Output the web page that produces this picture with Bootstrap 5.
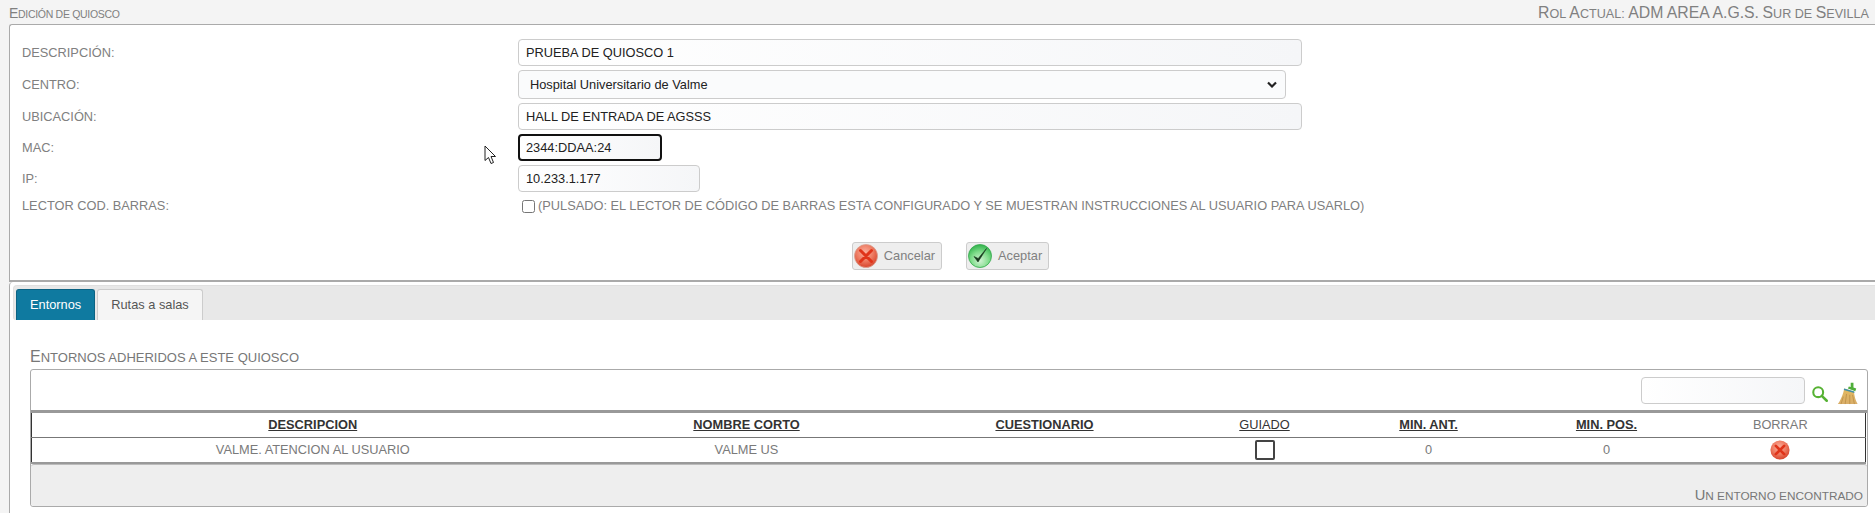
<!DOCTYPE html>
<html lang="es">
<head>
<meta charset="utf-8">
<title>Edición de quiosco</title>
<link rel="stylesheet" href="https://cdn.jsdelivr.net/npm/bootstrap@5.3.0/dist/css/bootstrap.min.css">
<style>
html, body { height: 100%; overflow: hidden; }
body { background: #f4f4f4; font-family: "Liberation Sans", Arial, sans-serif; font-size: 12.8px; color: #808080; position: relative; }
.caps-text { text-transform: uppercase; }
.top-strip { height: 24px; padding: 4px 6px 0 9px; line-height: 18px; color: #808080; }
.top-strip .left-title { font-size: 10.5px; letter-spacing: -.3px; }
.top-strip .left-title .cap-big { font-size: 14px; }
.top-strip .role-title { font-size: 12.6px; }
.top-strip .role-title .cap-big { font-size: 15.8px; }
.edit-panel { margin-left: 9px; background: #fff; border: 1px solid #aaa; border-bottom-width: 2px; border-right: 0; border-top-left-radius: 3px; padding: 14px 0 10px 12px; }
.field-label { width: 496px; flex: none; margin: 0; line-height: 16px; }
.edit-panel .form-control, .grid-search { height: 27px; padding: 2px 7px; font-size: 12.8px; line-height: 16px; color: #222; border: 1px solid #ccc; border-radius: 4px; background: linear-gradient(90deg, #fff, #f5f6f8); box-shadow: none; }
.w-desc { width: 784px; }
.w-mac { width: 144px; }
.w-ip { width: 182px; }
.edit-panel .form-control.mac-focus { border: 2px solid #111; padding: 2px 6px; }
.edit-panel .form-select { width: 768px; height: 29px; padding: 2px 6px 2px 11px; font-size: 12.8px; color: #222; border: 1px solid #ccc; border-radius: 4px; background-color: #fafbfc; background-image: url("data:image/svg+xml,%3csvg xmlns='http://www.w3.org/2000/svg' viewBox='0 0 10 7'%3e%3cpath fill='none' stroke='%23222' stroke-width='2.200' d='M1 1.500 5 5.500 9 1.500'/%3e%3c/svg%3e"); background-size: 10px 7px; background-position: right 8px center; }
.bar-row { height: 20px; }
.bar-check { width: 13px; height: 13px; margin: 0 3px 0 4px; flex: none; border-radius: 2px; border: 1px solid #555; background: #fff; }
.action-row { margin-top: 26px; padding-left: 4px; gap: 24px; }
.action-btn { height: 28px; padding: 0 6px 0 1px; display: flex; align-items: center; gap: 6px; background: #eee; border: 1px solid #ccc; border-radius: 3px; font-size: 12.8px; color: #808080; }
.lower-panel { margin-left: 9px; background: #fff; border-left: 1px solid #aaa; border-top-left-radius: 4px; padding-top: 3px; height: 231px; }
.tab-strip { margin-left: 3px; background: #e8e8e8; height: 35px; padding: 3px 0 0 2px; border: 1px solid #e0e0e0; border-width: 1px 0 0 1px; border-radius: 4px 0 0 3px; gap: 2px; }
.tab-strip .nav-link { height: 31px; margin: 0; padding: 0 13px; line-height: 29px; font-size: 12.8px; border: 1px solid #ccc; border-bottom: 0; border-radius: 3px 3px 0 0; background: #f5f5f5; color: #555; }
.tab-strip .nav-link.active { background: #0f7aa0; color: #fff; border-color: #0b6383; }
.lower-body { padding: 28px 7px 0 20px; }
.grid-title { font-size: 13px; line-height: 18px; margin-bottom: 2px; color: #777; font-weight: 400; }
.grid-title .cap-big { font-size: 16px; }
.grid-box { border: 1px solid #aaa; border-radius: 3px; background: #fff; }
.grid-tools { height: 43px; padding: 7px 8px 0 0; gap: 6px; border-bottom: 3px solid #999; }
.grid-search { width: 164px; flex: none; display: block; }
.grid-table { table-layout: fixed; width: calc(100% - 1px); margin: 0; border-collapse: collapse; border-left: 1px solid #333; border-right: 1px solid #333; }
.grid-table th, .grid-table td { padding: 0; text-align: center; vertical-align: middle; font-size: 12.8px; color: #7a7a7a; background: transparent; box-shadow: none; border-bottom: 1px solid #777; }
.grid-table th { height: 24px; font-weight: 400; }
.grid-table td { height: 26px; }
.grid-table tbody td { border-bottom: 2px solid #999; }
.grid-table th a { color: #333; font-weight: 700; }
.grid-table th a.plain-link { font-weight: 400; }
.c-desc { width: 562px; }
.c-name { width: 306px; }
.c-quest { width: 290px; }
.c-guide { width: 150px; }
.c-min { width: 178px; }
.row-check { display: block; width: 20px; height: 20px; margin: 0 auto; border: 2px solid #444; border-radius: 2px; background: #fff; }
.row-del { display: block; margin: 0 auto; }
.grid-foot { height: 42px; background: #eee; border-top: 1px solid #bbb; border-radius: 3px; padding: 0 4px 1px 0; font-size: 11.8px; line-height: 18px; color: #777; }
.grid-foot .cap-big { font-size: 14.7px; }
.mouse-pointer { position: absolute; left: 484px; top: 145px; }
</style>
</head>
<body>
<svg width="0" height="0" class="position-absolute">
  <defs>
    <radialGradient id="redBall" cx="45%" cy="35%" r="65%"><stop offset="0" stop-color="#fbb09e"/><stop offset=".55" stop-color="#ee7b62"/><stop offset="1" stop-color="#d8442c"/></radialGradient>
    <radialGradient id="greenBall" cx="50%" cy="70%" r="70%"><stop offset="0" stop-color="#d2f3d4"/><stop offset=".55" stop-color="#7fdc8a"/><stop offset="1" stop-color="#2fb24a"/></radialGradient>
    <linearGradient id="broomFill" x1="0" y1="0" x2="0" y2="1"><stop offset="0" stop-color="#e3b95f"/><stop offset="1" stop-color="#d9ae6a"/></linearGradient>
  </defs>
</svg>

<div class="top-strip d-flex justify-content-between">
  <span class="caps-text left-title"><span class="cap-big">E</span>dición de quiosco</span>
  <span class="caps-text role-title"><span class="cap-big">R</span>ol <span class="cap-big">A</span>ctual: <span class="cap-big">ADM AREA A.G.S.</span> <span class="cap-big">S</span>ur de <span class="cap-big">S</span>evilla</span>
</div>

<div class="edit-panel">
  <form class="d-flex flex-column gap-1">
    <div class="d-flex align-items-center"><label class="field-label">DESCRIPCIÓN:</label><input class="form-control w-desc" value="PRUEBA DE QUIOSCO 1"></div>
    <div class="d-flex align-items-center"><label class="field-label">CENTRO:</label><select class="form-select"><option>Hospital Universitario de Valme</option></select></div>
    <div class="d-flex align-items-center"><label class="field-label">UBICACIÓN:</label><input class="form-control w-desc" value="HALL DE ENTRADA DE AGSSS"></div>
    <div class="d-flex align-items-center"><label class="field-label">MAC:</label><input class="form-control w-mac mac-focus" value="2344:DDAA:24"></div>
    <div class="d-flex align-items-center"><label class="field-label">IP:</label><input class="form-control w-ip" value="10.233.1.177"></div>
    <div class="d-flex align-items-center bar-row"><label class="field-label">LECTOR COD. BARRAS:</label><input type="checkbox" class="bar-check"><span>(PULSADO: EL LECTOR DE CÓDIGO DE BARRAS ESTA CONFIGURADO Y SE MUESTRAN INSTRUCCIONES AL USUARIO PARA USARLO)</span></div>
  </form>
  <div class="d-flex justify-content-center action-row">
    <button type="button" class="action-btn">
      <svg width="24" height="24" viewBox="0 0 24 24"><circle cx="12" cy="12" r="11.5" fill="url(#redBall)" stroke="#d9a090" stroke-width=".8"/><path d="M6.5 6.5 17.5 17.5M17.5 6.5 6.5 17.5" stroke="#e0341a" stroke-width="3" stroke-linecap="round"/></svg>
      Cancelar
    </button>
    <button type="button" class="action-btn">
      <svg width="24" height="24" viewBox="0 0 24 24"><circle cx="12" cy="12" r="11.5" fill="url(#greenBall)" stroke="#35a84c" stroke-width=".8"/><path d="M6 12.5 10 18 18.500 4.500 10.200 14.500Z" fill="#17381d" stroke="#17381d" stroke-width=".6" stroke-linejoin="round"/></svg>
      Aceptar
    </button>
  </div>
</div>

<div class="lower-panel">
  <ul class="nav nav-tabs tab-strip">
    <li class="nav-item"><a class="nav-link active" href="#">Entornos</a></li>
    <li class="nav-item"><a class="nav-link" href="#">Rutas a salas</a></li>
  </ul>
  <div class="lower-body">
    <h2 class="grid-title caps-text"><span class="cap-big">E</span>ntornos adheridos a este quiosco</h2>
    <div class="grid-box">
      <div class="grid-tools d-flex justify-content-end align-items-start">
        <input class="grid-search form-control" aria-label="Buscar">
        <svg class="mt-2" width="18" height="18" viewBox="0 0 20 20"><circle cx="8" cy="8" r="5.500" fill="none" stroke="#56b233" stroke-width="2.300"/><path d="M12 12 17.500 17.500" stroke="#56b233" stroke-width="2.800" stroke-linecap="round"/></svg>
        <svg class="mt-1" width="24" height="24" viewBox="0 0 24 26"><path d="M16 2h3v5l3 1-1 3-8-3 1-2 2 .5Z" fill="#4fae3a"/><path d="M9 8 19.500 11.500C20 16 21 21 23.500 25H2C5 21 8 14 9 8Z" fill="url(#broomFill)"/><path d="M9 8 20 11.500 20 13 8.500 9.800Z" fill="#3f8fa8"/><path d="M8 17 5.500 25M11.500 14 10 25M15 15 15 25M18 15 20 25" stroke="#b98c45" stroke-width=".8" fill="none"/></svg>
      </div>
      <table class="table grid-table">
        <thead>
          <tr>
            <th class="c-desc"><a href="#">DESCRIPCION</a></th>
            <th class="c-name"><a href="#">NOMBRE CORTO</a></th>
            <th class="c-quest"><a href="#">CUESTIONARIO</a></th>
            <th class="c-guide"><a class="plain-link" href="#">GUIADO</a></th>
            <th class="c-min"><a href="#">MIN. ANT.</a></th>
            <th class="c-min"><a href="#">MIN. POS.</a></th>
            <th>BORRAR</th>
          </tr>
        </thead>
        <tbody>
          <tr>
            <td>VALME. ATENCION AL USUARIO</td>
            <td>VALME US</td>
            <td></td>
            <td><span class="row-check"></span></td>
            <td>0</td>
            <td>0</td>
            <td><svg class="row-del" width="20" height="20" viewBox="0 0 24 24"><circle cx="12" cy="12" r="11.500" fill="url(#redBall)"/><path d="M7 7 17 17M17 7 7 17" stroke="#e0341a" stroke-width="3.200" stroke-linecap="round"/></svg></td>
          </tr>
        </tbody>
      </table>
      <div class="grid-foot d-flex justify-content-end align-items-end"><span class="caps-text"><span class="cap-big">U</span>n entorno encontrado</span></div>
    </div>
  </div>
</div>

<svg class="mouse-pointer" width="13" height="20" viewBox="0 0 13 20"><path d="M1 1V15.500L4.500 12.500 7 18.500 9.500 17.500 7 11.500H11.500Z" fill="#fff" stroke="#222" stroke-width="1"/></svg>
</body>
</html>
